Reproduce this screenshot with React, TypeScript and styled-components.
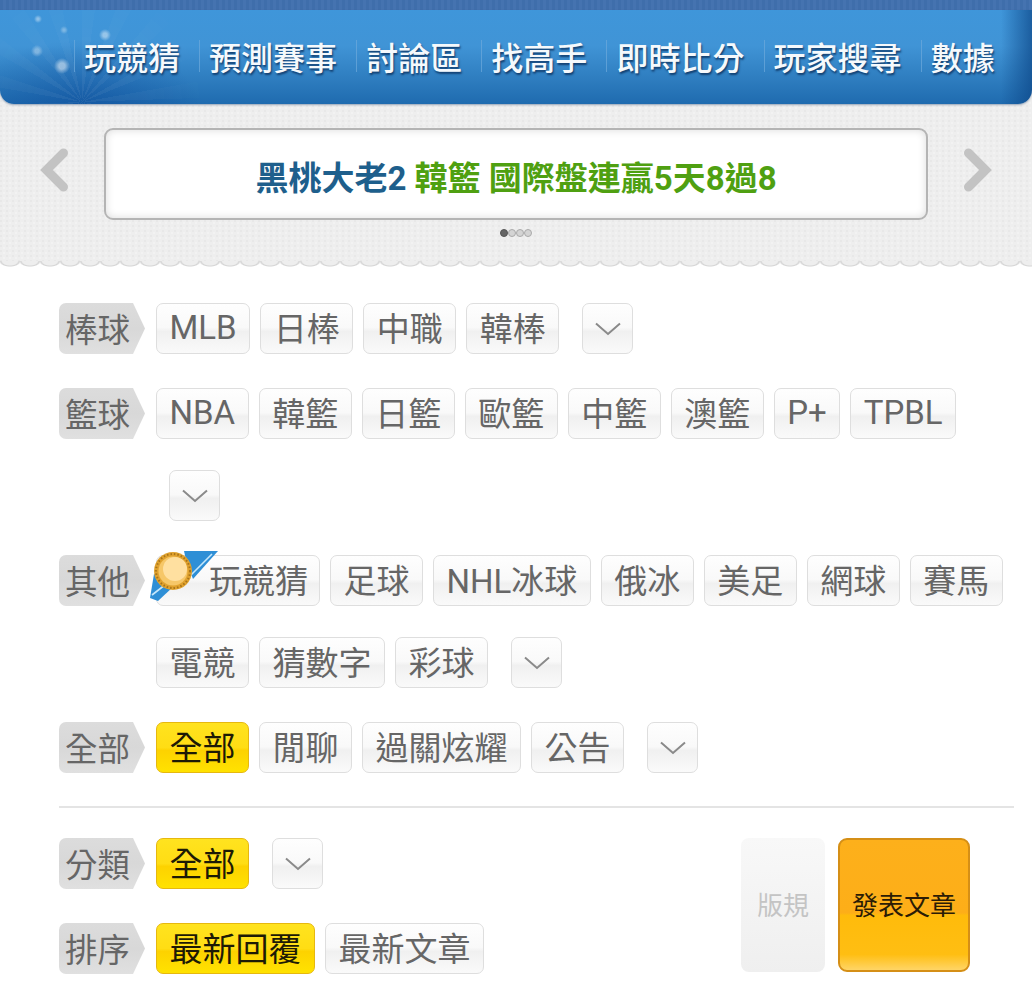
import styled, { createGlobalStyle } from 'styled-components';

const GlobalStyle = createGlobalStyle`
html, body {
    margin: 0;
    padding: 0;
    background: #fff;
    overflow: hidden;
}
body {
    font-family: Roboto, "Noto Sans CJK TC", sans-serif;
}
`;

const Page = styled.div`
width: 1032px;
height: 1000px;
overflow: hidden;
`;

const TopStrip = styled.div`
height: 10px;
background: repeating-linear-gradient(90deg, #3f6eab 0 3px, #4573b0 3px 6px);
`;

const Header = styled.header`
background-color: #eeeeee;
background-image:
    radial-gradient(circle at 1px 1px, #e8e8e8 1px, transparent 1.5px),
    radial-gradient(circle at 4px 3px, #f2f2f2 1px, transparent 1.5px);
background-size: 6px 5px;
`;

const Nav = styled.nav`
position: relative;
height: 94px;
box-sizing: border-box;
padding: 30px 0 0 74px;
display: flex;
align-items: flex-start;
border-radius: 0 0 14px 14px;
box-shadow: 0 1px 2px rgba(60, 90, 130, 0.5);
background:
    radial-gradient(circle at 62px 56px, rgba(255, 255, 255, 0.5) 0 3px, transparent 8px),
    radial-gradient(circle at 105px 25px, rgba(255, 255, 255, 0.45) 0 2px, transparent 6px),
    radial-gradient(circle at 37px 41px, rgba(255, 255, 255, 0.35) 0 2px, transparent 6px),
    radial-gradient(circle at 38px 9px, rgba(255, 255, 255, 0.4) 0 1px, transparent 4px),
    radial-gradient(circle at 64px 20px, rgba(255, 255, 255, 0.3) 0 1px, transparent 4px),
    radial-gradient(ellipse 120px 70px at 82px 100px, rgba(10, 70, 150, 0.5), transparent),
    linear-gradient(90deg, transparent 97%, rgba(12, 70, 135, 0.7) 100%),
    linear-gradient(180deg, #3f96da 0%, #4094d6 38%, #2f7ec0 72%, #1f6baf 100%);

&::before {
    content: '';
    position: absolute;
    left: 0;
    top: 0;
    width: 300px;
    height: 100%;
    background: repeating-conic-gradient(from 300deg at 82px 92px, rgba(255, 255, 255, 0.06) 0 8deg, transparent 8deg 20deg);
    mask-image: radial-gradient(circle at 82px 92px, #000 0, transparent 130px);
}
`;

const NavItem = styled.a`
position: relative;
padding: 0 19.1px 0 9px;
border-left: 1px solid rgba(110, 170, 220, 0.7);
height: 32px;
display: flex;
align-items: center;
font-size: 32px;
font-weight: 500;
color: #f5f9fc;
text-shadow: 1px 2px 2px #123f70;
white-space: nowrap;
`;

const Slider = styled.div`
display: flex;
align-items: flex-start;
gap: 35px;
padding: 24px 39px 0;
`;

const ArrowIcon = styled.svg`
flex: none;
width: 30px;
height: 46px;
margin-top: 20px;
fill: none;
stroke: #c3c3c3;
stroke-width: 9;
stroke-linejoin: miter;
stroke-linecap: round;
`;

const NoticeBox = styled.div`
flex: 1;
height: 92px;
box-sizing: border-box;
padding-top: 3px;
display: flex;
align-items: center;
justify-content: center;
background: #fff;
border: 2px solid #b4b4b4;
border-radius: 9px;
box-shadow: inset 0 0 9px rgba(0, 0, 0, 0.14);
font-size: 33px;
font-weight: 700;
white-space: pre;
`;

const NoticeAuthor = styled.span`
color: #1e5f8c;
`;

const NoticeText = styled.span`
color: #4fa011;
`;

const Dots = styled.div`
display: flex;
justify-content: center;
padding-top: 9px;
height: 41px;
box-sizing: border-box;
`;

const Dot = styled.span<{ $on?: boolean }>`
width: 8px;
height: 8px;
border-radius: 50%;
box-sizing: border-box;
background: ${(props) => (props.$on ? '#666' : '#d4d4d4')};
border: 1px solid ${(props) => (props.$on ? '#555' : '#aaa')};
`;

const Scallop = styled.div`
height: 7px;
background-color: #fff;
background-image: radial-gradient(ellipse 11px 6px at 10px 0, #eeeeee 0 68%, #d4d4d4 84%, #fff 100%);
background-size: 20px 7px;
`;

const Filters = styled.main`
padding: 35px 18px 0 59px;
`;

const Row = styled.div`
display: flex;
align-items: flex-start;
gap: 11px;
margin-bottom: 34px;
`;

const RowLabel = styled.div`
flex: none;
width: 86px;
height: 51px;
box-sizing: border-box;
padding: 0 0 3px 6px;
display: flex;
align-items: center;
font-size: 32.5px;
color: #666;
border-radius: 7px 0 0 7px;
background: linear-gradient(180deg, #dcdcdc 0%, #d8d8d8 50%, #e0e0e0 100%);
clip-path: polygon(0 0, calc(100% - 12px) 0, 100% 50%, calc(100% - 12px) 100%, 0 100%);
`;

const PillList = styled.div`
display: flex;
flex-wrap: wrap;
gap: 31px 10px;
max-width: 855px;
`;

const Pill = styled.a<{ $active?: boolean; $medal?: boolean }>`
position: relative;
height: 51px;
box-sizing: border-box;
padding: ${(props) => (props.$medal ? '0 11px 3px 52px' : '0 12.5px 3px')};
display: flex;
align-items: center;
font-size: 33px;
white-space: nowrap;
border-radius: 7px;
border: 1px solid ${(props) => (props.$active ? '#e6b80f' : '#dedede')};
color: ${(props) => (props.$active ? '#1d1a05' : '#666')};
background: ${(props) =>
    props.$active
        ? 'linear-gradient(180deg, #ffe31f 0%, #ffdd14 50%, #fdd200 56%, #ffe200 100%)'
        : 'linear-gradient(180deg, #fefefe 0%, #f9f9f9 48%, #f0f0f0 56%, #fafafa 100%)'};
`;

const MorePill = styled(Pill)`
width: 51px;
padding: 0;
justify-content: center;
margin-left: 13px;
`;

const ChevronIcon = styled.svg`
width: 28px;
height: 14px;
fill: none;
stroke: #8a8a8a;
stroke-width: 2;
`;

const Medal = styled.svg`
position: absolute;
left: -7px;
top: -8px;
width: 74px;
height: 54px;
`;

const Divider = styled.hr`
margin: -1px 0 30px;
border: 0;
border-top: 2px solid #e4e4e4;
`;

const BottomArea = styled.div`
display: flex;
justify-content: space-between;
align-items: flex-start;
padding-right: 44px;
`;

const SortColumn = styled.div`
display: flex;
flex-direction: column;
`;

const ActionGroup = styled.div`
display: flex;
gap: 13px;
`;

const RulesButton = styled.a`
width: 84px;
height: 134px;
box-sizing: border-box;
padding-bottom: 4px;
display: flex;
align-items: center;
justify-content: center;
border-radius: 8px;
font-size: 26px;
color: #c4c4c4;
background: linear-gradient(180deg, #f8f8f8 0%, #efefef 100%);
`;

const PostButton = styled.a`
width: 132px;
height: 134px;
box-sizing: border-box;
padding-bottom: 4px;
display: flex;
align-items: center;
justify-content: center;
border-radius: 9px;
border: 2px solid #d58f16;
font-size: 26px;
color: #2b1c05;
background: linear-gradient(180deg, #fdb01b 0%, #fdae18 56%, #ffbb0b 58%, #ffbe12 88%, #ffd566 100%);
`;

const leagues = [
    { label: '棒球', items: ['MLB', '日棒', '中職', '韓棒'] },
    { label: '籃球', items: ['NBA', '韓籃', '日籃', '歐籃', '中籃', '澳籃', 'P+', 'TPBL'] },
    { label: '其他', items: ['玩競猜', '足球', 'NHL冰球', '俄冰', '美足', '網球', '賽馬', '電競', '猜數字', '彩球'] },
    { label: '全部', items: ['全部', '閒聊', '過關炫耀', '公告'] },
];

const menu = ['玩競猜', '預測賽事', '討論區', '找高手', '即時比分', '玩家搜尋', '數據'];

function Chevron() {
    return (
        <ChevronIcon viewBox="0 0 28 14">
            <polyline points="2,1.5 14,12 26,1.5" />
        </ChevronIcon>
    );
}

function MedalBadge() {
    return (
        <Medal viewBox="0 0 74 54">
            <polygon points="34,3 68,3 43,31 36,12" fill="#2e8fd6" />
            <polygon points="4,26 0,50 8,53 24,38" fill="#2e8fd6" />
            <path d="M41 27 L62 6 M2 47 L20 33" stroke="#c4e7fb" strokeWidth="1.6" fill="none" />
            <circle cx="23" cy="23" r="19" fill="#e0a22e" />
            <circle cx="23" cy="23" r="17" fill="none" stroke="#a8741a" strokeWidth="2" strokeDasharray="1.5 2" />
            <circle cx="23" cy="23" r="14.5" fill="#f6c768" />
            <circle cx="25" cy="21" r="12" fill="#ffe0a0" />
        </Medal>
    );
}

function App() {
    return (
        <Page>
            <GlobalStyle />
            <TopStrip />
            <Header>
                <Nav>
                    {menu.map((name) => (
                        <NavItem key={name}>{name}</NavItem>
                    ))}
                </Nav>
                <Slider>
                    <ArrowIcon viewBox="0 0 30 46">
                        <polyline points="24.5,5 7.5,22 24.5,39" />
                    </ArrowIcon>
                    <NoticeBox>
                        <NoticeAuthor>黑桃大老2 </NoticeAuthor>
                        <NoticeText>韓籃 國際盤連贏5天8過8</NoticeText>
                    </NoticeBox>
                    <ArrowIcon viewBox="0 0 30 46">
                        <polyline points="5.5,5 22.5,22 5.5,39" />
                    </ArrowIcon>
                </Slider>
                <Dots>
                    <Dot $on />
                    <Dot />
                    <Dot />
                    <Dot />
                </Dots>
                <Scallop />
            </Header>
            <Filters>
                {leagues.map((group) => (
                    <Row key={group.label}>
                        <RowLabel>{group.label}</RowLabel>
                        <PillList>
                            {group.items.map((item, index) => (
                                <Pill
                                    key={item}
                                    $active={group.label === '全部' && index === 0}
                                    $medal={item === '玩競猜'}
                                >
                                    {item === '玩競猜' && <MedalBadge />}
                                    {item}
                                </Pill>
                            ))}
                            <MorePill as="a">
                                <Chevron />
                            </MorePill>
                        </PillList>
                    </Row>
                ))}
                <Divider />
                <BottomArea>
                    <SortColumn>
                        <Row>
                            <RowLabel>分類</RowLabel>
                            <PillList>
                                <Pill $active>全部</Pill>
                                <MorePill as="a">
                                    <Chevron />
                                </MorePill>
                            </PillList>
                        </Row>
                        <Row>
                            <RowLabel>排序</RowLabel>
                            <PillList>
                                <Pill $active>最新回覆</Pill>
                                <Pill>最新文章</Pill>
                            </PillList>
                        </Row>
                    </SortColumn>
                    <ActionGroup>
                        <RulesButton>版規</RulesButton>
                        <PostButton>發表文章</PostButton>
                    </ActionGroup>
                </BottomArea>
            </Filters>
        </Page>
    );
}

export default App;
